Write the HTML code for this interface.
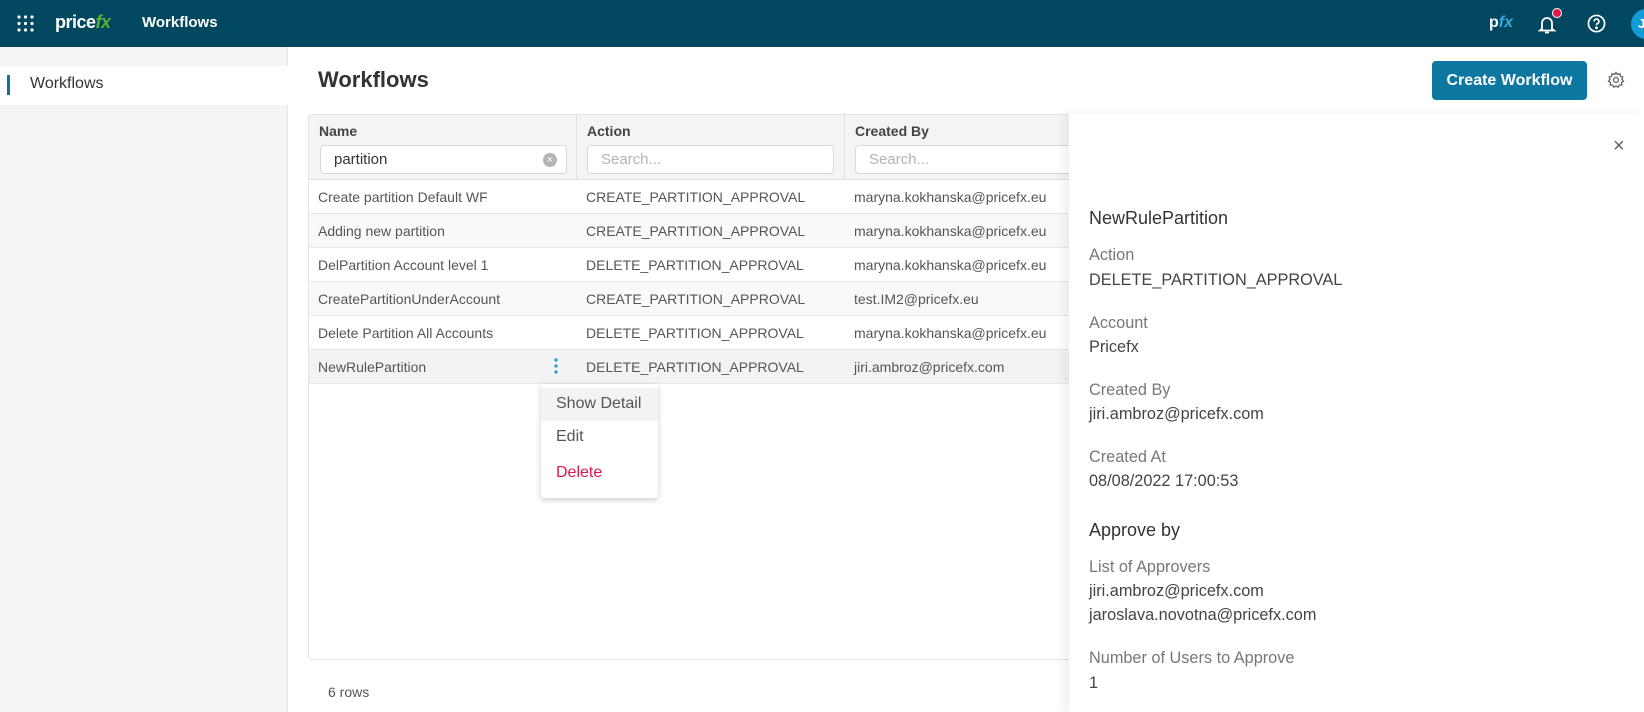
<!DOCTYPE html>
<html><head><meta charset="utf-8"><style>
*{box-sizing:border-box;margin:0;padding:0}
body{width:1644px;height:712px;overflow:hidden;background:#fff;font-family:"Liberation Sans",Arial,sans-serif;position:relative;color:#444}
.a{position:absolute;white-space:nowrap}
.top{left:0;top:0;width:1644px;height:47px;background:#00475f}
.side{left:0;top:47px;width:288px;height:665px;background:#f3f4f6;border-right:1px solid #e3e5e8}
.tbl{left:308px;top:114px;width:780px;height:546px;border:1px solid #e1e3e6;border-radius:3px;background:#fff}
.hdr{left:309px;top:115px;width:770px;height:65px;background:#f3f4f6;border-bottom:1px solid #dfe1e4}
.row{left:309px;width:770px;height:34px;border-bottom:1px solid #e6e8eb;font-size:14px;color:#555}
.row span{position:absolute;top:9px}
.inp{height:29px;background:#fff;border:1px solid #d6d9dd;border-radius:4px;font-size:15px;padding:5px 13px;color:#b0b4b9}
.lbl{font-size:16.3px;color:#777}
.val{font-size:16.3px;color:#444}
</style></head><body>
<div class="a top"></div>
<svg class="a" style="left:17px;top:15px" width="17" height="17" viewBox="0 0 17 17" fill="#fff"><circle cx="2" cy="2" r="1.6"/><circle cx="8.5" cy="2" r="1.6"/><circle cx="15" cy="2" r="1.6"/><circle cx="2" cy="8.5" r="1.6"/><circle cx="8.5" cy="8.5" r="1.6"/><circle cx="15" cy="8.5" r="1.6"/><circle cx="2" cy="15" r="1.6"/><circle cx="8.5" cy="15" r="1.6"/><circle cx="15" cy="15" r="1.6"/></svg>
<div class="a" style="left:55px;top:12px;font-size:18px;font-weight:bold;color:#fff;letter-spacing:-0.5px">price<span style="color:#5bb031;font-style:italic">fx</span></div>
<div class="a" style="left:142px;top:14px;font-size:15px;font-weight:bold;color:#fff">Workflows</div>
<div class="a" style="left:1489px;top:14px;font-size:16px;font-weight:bold;color:#fff">p<span style="color:#3aa7e0;font-style:italic">fx</span></div>
<svg class="a" style="left:1538px;top:13px" width="20" height="22" viewBox="0 0 20 22" fill="none" stroke="#fff" stroke-width="1.8"><path d="M4 16V10a5 5 0 0 1 10 0v6l2 1.5H2z"/><path d="M7 19.5h4"/></svg>
<div class="a" style="left:1552px;top:8px;width:10px;height:10px;border-radius:50%;background:#e4174b;border:1px solid #fff"></div>
<svg class="a" style="left:1587px;top:14px" width="19" height="19" viewBox="0 0 20 20" fill="none" stroke="#fff" stroke-width="1.8"><circle cx="10" cy="10" r="8.5"/><path d="M7.5 7.8a2.5 2.5 0 1 1 3.3 2.4c-.6.3-.8.8-.8 1.6"/><circle cx="10" cy="14.5" r=".6" fill="#fff"/></svg>
<div class="a" style="left:1631px;top:9px;width:30px;height:30px;border-radius:50%;background:#139bd6;color:#fff;font-size:13px;font-weight:bold;padding:7px 0 0 7px">J</div>

<div class="a side"></div>
<div class="a" style="left:0;top:66px;width:288px;height:39px;background:#fff"></div>
<div class="a" style="left:7px;top:75px;width:3px;height:20px;background:#0c7399"></div>
<div class="a" style="left:30px;top:75px;font-size:16px;color:#333">Workflows</div>

<div class="a" style="left:318px;top:67px;font-size:22px;font-weight:bold;color:#333">Workflows</div>
<div class="a" style="left:1432px;top:61px;width:155px;height:39px;background:#0c77a1;border-radius:4px;color:#fff;font-size:16px;font-weight:bold;text-align:center;line-height:39px">Create Workflow</div>
<svg class="a" style="left:1607px;top:71px" width="18" height="18" viewBox="0 0 24 24" fill="none" stroke="#666" stroke-width="1.8"><circle cx="12" cy="12" r="3.2"/><path d="M12 2l2 2.6 3.2-.8.8 3.2L21 8l-1 3 2 2.5-2.6 1.8.3 3.3-3.3.2L15 21.6 12 20l-3 1.6-1.4-2.8-3.3-.2.3-3.3L2 13.5 4 11 3 8l3-1 .8-3.2 3.2.8z"/></svg>

<div class="a tbl"></div>
<div class="a hdr"></div>
<div class="a" style="left:576px;top:115px;width:1px;height:65px;background:#dfe1e4"></div>
<div class="a" style="left:844px;top:115px;width:1px;height:65px;background:#dfe1e4"></div>
<div class="a" style="left:319px;top:123px;font-size:14px;font-weight:bold;color:#444">Name</div>
<div class="a" style="left:587px;top:123px;font-size:14px;font-weight:bold;color:#444">Action</div>
<div class="a" style="left:855px;top:123px;font-size:14px;font-weight:bold;color:#444">Created By</div>
<div class="a inp" style="left:320px;top:145px;width:247px;color:#333">partition</div>
<div class="a" style="left:543px;top:153px;width:14px;height:14px;border-radius:50%;background:#b5b5b5;color:#fff;font-size:11px;text-align:center;line-height:14px">×</div>
<div class="a inp" style="left:587px;top:145px;width:247px">Search...</div>
<div class="a inp" style="left:855px;top:145px;width:240px">Search...</div>

<div class="a row" style="top:180px"><span style="left:9px">Create partition Default WF</span><span style="left:277px">CREATE_PARTITION_APPROVAL</span><span style="left:545px">maryna.kokhanska@pricefx.eu</span></div>
<div class="a row" style="top:214px;background:#f8f9fb"><span style="left:9px">Adding new partition</span><span style="left:277px">CREATE_PARTITION_APPROVAL</span><span style="left:545px">maryna.kokhanska@pricefx.eu</span></div>
<div class="a row" style="top:248px"><span style="left:9px">DelPartition Account level 1</span><span style="left:277px">DELETE_PARTITION_APPROVAL</span><span style="left:545px">maryna.kokhanska@pricefx.eu</span></div>
<div class="a row" style="top:282px;background:#f8f9fb"><span style="left:9px">CreatePartitionUnderAccount</span><span style="left:277px">CREATE_PARTITION_APPROVAL</span><span style="left:545px">test.IM2@pricefx.eu</span></div>
<div class="a row" style="top:316px"><span style="left:9px">Delete Partition All Accounts</span><span style="left:277px">DELETE_PARTITION_APPROVAL</span><span style="left:545px">maryna.kokhanska@pricefx.eu</span></div>
<div class="a row" style="top:350px;background:#f2f3f5"><span style="left:9px">NewRulePartition</span><span style="left:277px">DELETE_PARTITION_APPROVAL</span><span style="left:545px">jiri.ambroz@pricefx.com</span></div>
<svg class="a" style="left:553px;top:356px" width="6" height="20" viewBox="0 0 6 20" fill="#1a9bd7"><circle cx="3" cy="4" r="1.6"/><circle cx="3" cy="10" r="1.6"/><circle cx="3" cy="16" r="1.6"/></svg>

<div class="a" style="left:541px;top:384px;width:117px;height:114px;background:#fff;box-shadow:0 2px 6px rgba(0,0,0,.2);border-radius:2px"></div>
<div class="a" style="left:541px;top:388px;width:117px;height:33px;background:#f2f3f5"></div>
<div class="a" style="left:556px;top:395px;font-size:16px;color:#555">Show Detail</div>
<div class="a" style="left:556px;top:428px;font-size:16px;color:#555">Edit</div>
<div class="a" style="left:556px;top:464px;font-size:16px;color:#e4174b">Delete</div>

<div class="a" style="left:328px;top:684px;font-size:14px;color:#555">6 rows</div>

<div class="a" style="left:1069px;top:114px;width:575px;height:598px;background:#fff;box-shadow:-6px 0 10px rgba(0,0,0,.06)"></div>
<div class="a" style="left:1613px;top:135px;font-size:20px;color:#666">×</div>
<div class="a" style="left:1089px;top:208px;font-size:18px;color:#333">NewRulePartition</div>
<div class="a lbl" style="left:1089px;top:246px">Action</div>
<div class="a val" style="left:1089px;top:271px">DELETE_PARTITION_APPROVAL</div>
<div class="a lbl" style="left:1089px;top:314px">Account</div>
<div class="a val" style="left:1089px;top:338px">Pricefx</div>
<div class="a lbl" style="left:1089px;top:381px">Created By</div>
<div class="a val" style="left:1089px;top:405px">jiri.ambroz@pricefx.com</div>
<div class="a lbl" style="left:1089px;top:448px">Created At</div>
<div class="a val" style="left:1089px;top:472px">08/08/2022 17:00:53</div>
<div class="a" style="left:1089px;top:520px;font-size:18px;color:#333">Approve by</div>
<div class="a lbl" style="left:1089px;top:558px">List of Approvers</div>
<div class="a val" style="left:1089px;top:582px">jiri.ambroz@pricefx.com</div>
<div class="a val" style="left:1089px;top:606px">jaroslava.novotna@pricefx.com</div>
<div class="a lbl" style="left:1089px;top:649px">Number of Users to Approve</div>
<div class="a val" style="left:1089px;top:674px">1</div>
</body></html>
